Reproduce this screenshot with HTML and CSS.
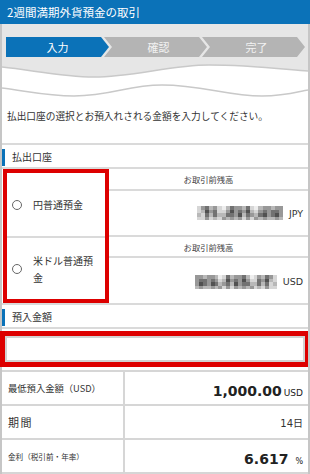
FILE: index.html
```html
<!DOCTYPE html>
<html lang="ja">
<head>
<meta charset="utf-8">
<title>2週間満期外貨預金の取引</title>
<link rel="stylesheet" href="styles.css">
</head>
<body>
<header class="title-bar">2週間満期外貨預金の取引</header>
<div class="page">
  <div class="steps-area">
    <div class="steps">
      <div class="step step-active">入力</div>
      <div class="step step-next">確認</div>
      <div class="step step-next">完了</div>
    </div>
  </div>
  <svg class="wave" width="306" height="43" viewBox="0 0 306 43">
    <path d="M0 0 V10 C30 13 60 20 92 20 C130 20 170 8 207 8 C245 8 280 12 306 14 V0 Z" fill="#e6e6e6"/>
    <path d="M0 10 C30 13 60 20 92 20 C130 20 170 8 207 8 C245 8 280 12 306 14" fill="none" stroke="#c9c9c9" stroke-width="1.6"/>
    <path d="M0 31 C25 34 45 39 72 39 C110 39 125 28 160 28 C200 28 225 39 260 39 C285 39 298 34 306 33" fill="none" stroke="#c9c9c9" stroke-width="1.6"/>
  </svg>
  <p class="intro">払出口座の選択とお預入れされる金額を入力してください。</p>

  <h2 class="sec-head">払出口座</h2>
  <div class="accounts">
    <div class="acct-choices">
      <label class="choice choice-1"><span class="radio"></span><span class="choice-text">円普通預金</span></label>
      <label class="choice choice-2"><span class="radio"></span><span class="choice-text">米ドル普通預金</span></label>
    </div>
    <div class="acct-balances">
      <div class="bal-head bal-head-1">お取引前残高</div>
      <div class="bal-value bal-value-1">
        <svg class="mosaic mosaic-jpy" width="86" height="14" viewBox="0 0 21 4" preserveAspectRatio="none" shape-rendering="crispEdges">
          <defs>
            <symbol id="mz" viewBox="0 0 21 4" width="21" height="4">
              <rect width="21" height="4" fill="#d6d6d6"/>
              <path fill="#eeeeee" d="M6 0h1v1h-1zM14 0h1v1h-1z"/>
              <path fill="#b8b8b8" d="M3 0h1v1h-1zM7 0h1v1h-1zM11 0h1v1h-1zM15 0h1v1h-1zM18 0h1v1h-1zM1 1h1v1h-1zM13 1h1v1h-1zM0 2h1v1h-1zM3 2h1v1h-1zM5 2h1v1h-1zM6 2h1v1h-1zM11 2h1v1h-1zM14 2h1v1h-1zM4 3h1v1h-1zM7 3h1v1h-1zM9 3h1v1h-1zM15 3h1v1h-1zM17 3h1v1h-1zM18 3h1v1h-1zM20 3h1v1h-1z"/>
              <path fill="#989898" d="M1 0h1v1h-1zM4 0h1v1h-1zM9 0h1v1h-1zM10 0h1v1h-1zM16 0h1v1h-1zM17 0h1v1h-1zM19 0h1v1h-1zM20 0h1v1h-1zM3 1h1v1h-1zM7 1h1v1h-1zM9 1h1v1h-1zM11 1h1v1h-1zM15 1h1v1h-1zM17 1h1v1h-1zM20 1h1v1h-1zM9 2h1v1h-1zM13 2h1v1h-1zM17 2h1v1h-1zM20 2h1v1h-1zM2 3h1v1h-1zM6 3h1v1h-1zM8 3h1v1h-1zM10 3h1v1h-1zM12 3h1v1h-1zM14 3h1v1h-1zM16 3h1v1h-1zM19 3h1v1h-1z"/>
              <path fill="#727272" d="M2 0h1v1h-1zM8 0h1v1h-1zM12 0h1v1h-1zM4 1h1v1h-1zM10 1h1v1h-1zM16 1h1v1h-1zM18 1h1v1h-1zM19 1h1v1h-1zM2 2h1v1h-1zM4 2h1v1h-1zM7 2h1v1h-1zM8 2h1v1h-1zM12 2h1v1h-1zM15 2h1v1h-1zM18 2h1v1h-1z"/>
              <path fill="#515151" d="M2 1h1v1h-1zM8 1h1v1h-1zM12 1h1v1h-1zM10 2h1v1h-1zM16 2h1v1h-1zM19 2h1v1h-1z"/>
            </symbol>
          </defs>
          <use href="#mz"/>
        </svg>
        <span class="ccy">JPY</span>
      </div>
      <div class="bal-head bal-head-2">お取引前残高</div>
      <div class="bal-value bal-value-2">
        <svg class="mosaic mosaic-usd" width="82" height="14" viewBox="0 0 21 4" preserveAspectRatio="none" shape-rendering="crispEdges">
          <use href="#mz" transform="translate(21 0) scale(-1 1)"/>
        </svg>
        <span class="ccy">USD</span>
      </div>
    </div>
  </div>

  <h2 class="sec-head sec-head-2">預入金額</h2>
  <div class="amount-box"><input class="amount-input" type="text" aria-label="預入金額"></div>

  <div class="info">
    <div class="info-label label-min">最低預入金額（USD）</div>
    <div class="info-value"><span class="big">1,000.00</span><span class="unit">USD</span></div>
    <div class="info-label label-term">期間</div>
    <div class="info-value"><span class="plain">14日</span></div>
    <div class="info-label label-rate">金利（税引前・年率）</div>
    <div class="info-value"><span class="big">6.617</span><span class="unit unit-pct">%</span></div>
  </div>
</div>
</body>
</html>
```

FILE: styles.css
```css
* { box-sizing: border-box; }

body {
  margin: 0;
  width: 310px;
  background: #fff;
  color: #333;
  font-family: "Noto Sans CJK JP", "Noto Sans", sans-serif;
}

.title-bar {
  height: 24px;
  background: #0b72b8;
  color: #fff;
  font-size: 11.5px;
  line-height: 24px;
  padding-left: 7px;
}

.page {
  border-left: 2px solid #c6c6c6;
  border-right: 2px solid #c6c6c6;
}

.steps-area {
  background: #e6e6e6;
  padding: 13px 0 0 4px;
}

.steps {
  display: flex;
  height: 20px;
}

.step {
  width: 103px;
  height: 20px;
  display: flex;
  align-items: center;
  justify-content: center;
  font-size: 11px;
  flex: none;
}

.step-active {
  background: #0b72b8;
  color: #fff;
  clip-path: polygon(0 0, 95px 0, 103px 50%, 95px 100%, 0 100%);
}

.step-next {
  background: #b4b4b4;
  color: #f2f2f2;
  margin-left: -5px;
  padding-left: 6px;
  clip-path: polygon(0 0, 95px 0, 103px 50%, 95px 100%, 0 100%, 8px 50%);
}

.wave {
  display: block;
}

.intro {
  margin: 0;
  padding: 9px 4px 20px 5px;
  font-size: 9.7px;
  line-height: 14px;
  color: #333;
}

.sec-head {
  margin: 0;
  height: 26px;
  border-top: 2px solid #dadada;
  border-bottom: 2px solid #dadada;
  display: flex;
  align-items: center;
  font-size: 10px;
  font-weight: normal;
  color: #333;
}

.sec-head::before {
  content: "";
  width: 3px;
  height: 17px;
  margin-top: 2px;
  margin-right: 7px;
  background: #0b72b8;
}

.accounts {
  display: flex;
  height: 134px;
}

.acct-choices {
  width: 106px;
  margin-left: 1px;
  border: 4px solid #dd0000;
  display: flex;
  flex-direction: column;
  flex: none;
}

.choice {
  display: flex;
  align-items: center;
  gap: 11px;
  padding-left: 5px;
  font-size: 10px;
  line-height: 17px;
  color: #333;
}

.choice-1 {
  height: 65px;
  border-bottom: 2px solid #dadada;
}

.choice-2 {
  flex: 1;
}

.choice-text {
  width: 64px;
}

.radio {
  width: 10px;
  height: 10px;
  border: 1px solid #666;
  border-radius: 50%;
  background: #fff;
  flex: none;
}

.acct-balances {
  flex: 1;
  display: flex;
  flex-direction: column;
}

.bal-head {
  display: flex;
  align-items: center;
  justify-content: center;
  font-size: 8.3px;
  color: #444;
  border-bottom: 2px solid #dadada;
}

.bal-head-1 { height: 22px; }
.bal-head-2 { height: 21px; }

.bal-value {
  display: flex;
  align-items: center;
  justify-content: flex-end;
  gap: 6px;
  padding-right: 5px;
}

.bal-value-1 {
  height: 46px;
  border-bottom: 2px solid #dadada;
}

.bal-value-2 {
  flex: 1;
  padding-top: 2px;
}

.mosaic {
  display: block;
  flex: none;
}

.ccy {
  font-family: "DejaVu Sans", sans-serif;
  font-size: 9.5px;
  color: #333;
}

.sec-head-2 {
  margin-top: 0;
}

.amount-box {
  margin: 2px 0 0 -2px;
  width: 308px;
  border-style: solid;
  border-color: #dd0000;
  border-width: 5px 3px 5px 5px;
}

.amount-input {
  display: block;
  width: 100%;
  height: 26px;
  margin: 0;
  border: 2px solid #d2d2d2;
  background: #fff;
  outline: none;
}

.info {
  margin-top: 3px;
  display: grid;
  grid-template-columns: 123px 1fr;
  border-top: 2px solid #d6d6d6;
}

.info-label,
.info-value {
  height: 34px;
  border-bottom: 2px solid #d6d6d6;
  display: flex;
  align-items: center;
}

.info-label {
  padding-left: 6px;
  border-right: 2px solid #d6d6d6;
  color: #333;
}

.label-min { font-size: 9.3px; }
.label-term { font-size: 11px; letter-spacing: 1.5px; }
.label-rate { font-size: 7.6px; }

.info-value {
  justify-content: flex-end;
  align-items: baseline;
  padding-right: 5px;
  padding-top: 11px;
  font-family: "DejaVu Sans", "Noto Sans CJK JP", sans-serif;
  color: #222;
}

.big {
  font-size: 14px;
  font-weight: bold;
  line-height: 16px;
}

.unit {
  font-size: 9px;
  margin-left: 2px;
}

.unit-pct {
  font-size: 8px;
  margin-left: 7px;
}

.plain {
  font-size: 10px;
  line-height: 14px;
  color: #333;
}
```
